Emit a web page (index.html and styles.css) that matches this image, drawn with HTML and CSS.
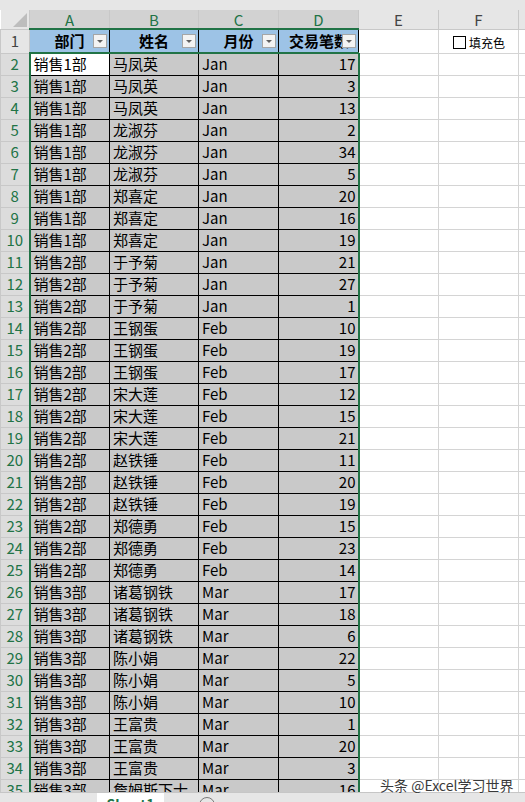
FILE: index.html
```html
<!DOCTYPE html>
<html lang="zh-CN">
<head>
    <meta charset="UTF-8">
    <meta name="viewport" content="width=device-width, initial-scale=1.0">
    <title>Sheet1</title>
    <link rel="stylesheet" href="styles.css">
</head>
<body>

    <div class="topbar"></div>

    <div class="sheet">
        <table class="grid">
            <colgroup>
                <col class="c-rh">
                <col class="c-a">
                <col class="c-b">
                <col class="c-c">
                <col class="c-d">
                <col class="c-e">
                <col class="c-f">
                <col class="c-g">
            </colgroup>
            <tr class="colhead">
                <th class="corner"><span class="corner-mark"></span></th>
                <th class="sel">A</th>
                <th class="sel">B</th>
                <th class="sel">C</th>
                <th class="sel">D</th>
                <th>E</th>
                <th>F</th>
                <th></th>
            </tr>
            <tr class="head">
                <th class="rh">1</th>
                <td>部门<span class="filter"></span></td>
                <td>姓名<span class="filter"></span></td>
                <td>月份<span class="filter"></span></td>
                <td class="num-head">交易笔数<span class="filter"></span></td>
                <td class="g"></td>
                <td class="g"><label class="check"><span class="box"></span>填充色</label></td>
                <td class="g"></td>
            </tr>
            <tr class="first"><th class="rh sel">2</th><td class="a active">销售1部</td><td>马凤英</td><td>Jan</td><td class="n">17</td><td class="g"></td><td class="g"></td><td class="g"></td></tr>
            <tr><th class="rh sel">3</th><td class="a">销售1部</td><td>马凤英</td><td>Jan</td><td class="n">3</td><td class="g"></td><td class="g"></td><td class="g"></td></tr>
            <tr><th class="rh sel">4</th><td class="a">销售1部</td><td>马凤英</td><td>Jan</td><td class="n">13</td><td class="g"></td><td class="g"></td><td class="g"></td></tr>
            <tr><th class="rh sel">5</th><td class="a">销售1部</td><td>龙淑芬</td><td>Jan</td><td class="n">2</td><td class="g"></td><td class="g"></td><td class="g"></td></tr>
            <tr><th class="rh sel">6</th><td class="a">销售1部</td><td>龙淑芬</td><td>Jan</td><td class="n">34</td><td class="g"></td><td class="g"></td><td class="g"></td></tr>
            <tr><th class="rh sel">7</th><td class="a">销售1部</td><td>龙淑芬</td><td>Jan</td><td class="n">5</td><td class="g"></td><td class="g"></td><td class="g"></td></tr>
            <tr><th class="rh sel">8</th><td class="a">销售1部</td><td>郑喜定</td><td>Jan</td><td class="n">20</td><td class="g"></td><td class="g"></td><td class="g"></td></tr>
            <tr><th class="rh sel">9</th><td class="a">销售1部</td><td>郑喜定</td><td>Jan</td><td class="n">16</td><td class="g"></td><td class="g"></td><td class="g"></td></tr>
            <tr><th class="rh sel">10</th><td class="a">销售1部</td><td>郑喜定</td><td>Jan</td><td class="n">19</td><td class="g"></td><td class="g"></td><td class="g"></td></tr>
            <tr><th class="rh sel">11</th><td class="a">销售2部</td><td>于予菊</td><td>Jan</td><td class="n">21</td><td class="g"></td><td class="g"></td><td class="g"></td></tr>
            <tr><th class="rh sel">12</th><td class="a">销售2部</td><td>于予菊</td><td>Jan</td><td class="n">27</td><td class="g"></td><td class="g"></td><td class="g"></td></tr>
            <tr><th class="rh sel">13</th><td class="a">销售2部</td><td>于予菊</td><td>Jan</td><td class="n">1</td><td class="g"></td><td class="g"></td><td class="g"></td></tr>
            <tr><th class="rh sel">14</th><td class="a">销售2部</td><td>王钢蛋</td><td>Feb</td><td class="n">10</td><td class="g"></td><td class="g"></td><td class="g"></td></tr>
            <tr><th class="rh sel">15</th><td class="a">销售2部</td><td>王钢蛋</td><td>Feb</td><td class="n">19</td><td class="g"></td><td class="g"></td><td class="g"></td></tr>
            <tr><th class="rh sel">16</th><td class="a">销售2部</td><td>王钢蛋</td><td>Feb</td><td class="n">17</td><td class="g"></td><td class="g"></td><td class="g"></td></tr>
            <tr><th class="rh sel">17</th><td class="a">销售2部</td><td>宋大莲</td><td>Feb</td><td class="n">12</td><td class="g"></td><td class="g"></td><td class="g"></td></tr>
            <tr><th class="rh sel">18</th><td class="a">销售2部</td><td>宋大莲</td><td>Feb</td><td class="n">15</td><td class="g"></td><td class="g"></td><td class="g"></td></tr>
            <tr><th class="rh sel">19</th><td class="a">销售2部</td><td>宋大莲</td><td>Feb</td><td class="n">21</td><td class="g"></td><td class="g"></td><td class="g"></td></tr>
            <tr><th class="rh sel">20</th><td class="a">销售2部</td><td>赵铁锤</td><td>Feb</td><td class="n">11</td><td class="g"></td><td class="g"></td><td class="g"></td></tr>
            <tr><th class="rh sel">21</th><td class="a">销售2部</td><td>赵铁锤</td><td>Feb</td><td class="n">20</td><td class="g"></td><td class="g"></td><td class="g"></td></tr>
            <tr><th class="rh sel">22</th><td class="a">销售2部</td><td>赵铁锤</td><td>Feb</td><td class="n">19</td><td class="g"></td><td class="g"></td><td class="g"></td></tr>
            <tr><th class="rh sel">23</th><td class="a">销售2部</td><td>郑德勇</td><td>Feb</td><td class="n">15</td><td class="g"></td><td class="g"></td><td class="g"></td></tr>
            <tr><th class="rh sel">24</th><td class="a">销售2部</td><td>郑德勇</td><td>Feb</td><td class="n">23</td><td class="g"></td><td class="g"></td><td class="g"></td></tr>
            <tr><th class="rh sel">25</th><td class="a">销售2部</td><td>郑德勇</td><td>Feb</td><td class="n">14</td><td class="g"></td><td class="g"></td><td class="g"></td></tr>
            <tr><th class="rh sel">26</th><td class="a">销售3部</td><td>诸葛钢铁</td><td>Mar</td><td class="n">17</td><td class="g"></td><td class="g"></td><td class="g"></td></tr>
            <tr><th class="rh sel">27</th><td class="a">销售3部</td><td>诸葛钢铁</td><td>Mar</td><td class="n">18</td><td class="g"></td><td class="g"></td><td class="g"></td></tr>
            <tr><th class="rh sel">28</th><td class="a">销售3部</td><td>诸葛钢铁</td><td>Mar</td><td class="n">6</td><td class="g"></td><td class="g"></td><td class="g"></td></tr>
            <tr><th class="rh sel">29</th><td class="a">销售3部</td><td>陈小娟</td><td>Mar</td><td class="n">22</td><td class="g"></td><td class="g"></td><td class="g"></td></tr>
            <tr><th class="rh sel">30</th><td class="a">销售3部</td><td>陈小娟</td><td>Mar</td><td class="n">5</td><td class="g"></td><td class="g"></td><td class="g"></td></tr>
            <tr><th class="rh sel">31</th><td class="a">销售3部</td><td>陈小娟</td><td>Mar</td><td class="n">10</td><td class="g"></td><td class="g"></td><td class="g"></td></tr>
            <tr><th class="rh sel">32</th><td class="a">销售3部</td><td>王富贵</td><td>Mar</td><td class="n">1</td><td class="g"></td><td class="g"></td><td class="g"></td></tr>
            <tr><th class="rh sel">33</th><td class="a">销售3部</td><td>王富贵</td><td>Mar</td><td class="n">20</td><td class="g"></td><td class="g"></td><td class="g"></td></tr>
            <tr><th class="rh sel">34</th><td class="a">销售3部</td><td>王富贵</td><td>Mar</td><td class="n">3</td><td class="g"></td><td class="g"></td><td class="g"></td></tr>
            <tr><th class="rh sel">35</th><td class="a">销售3部</td><td>詹姆斯下士</td><td>Mar</td><td class="n">16</td><td class="g"></td><td class="g"></td><td class="g"></td></tr>
        </table>
    </div>

    <div class="tabbar">
        <div class="tab">Sheet1</div>
        <div class="add-sheet"></div>
    </div>

    <!-- watermark over the grid -->
    <div class="watermark">头条 @Excel学习世界</div>

</body>
</html>
```

FILE: styles.css
```css
* {
    margin: 0;
    padding: 0;
    box-sizing: border-box;
}

body {
    width: 525px;
    height: 802px;
    overflow: hidden;
    position: relative;
    background-color: #ffffff;
    font-family: "Noto Sans CJK SC", "Liberation Sans", sans-serif;
    color: #000000;
}

.topbar {
    height: 10px;
    background-color: #e6e6e6;
}

.sheet {
    height: 782px;
    overflow: hidden;
}

/* Grid */
.grid {
    border-collapse: collapse;
    table-layout: fixed;
    width: 598px;
}

.c-rh { width: 29px; }
.c-a { width: 80px; }
.c-b { width: 89px; }
.c-c { width: 80px; }
.c-d { width: 80px; }
.c-e { width: 80px; }
.c-f { width: 80px; }
.c-g { width: 80px; }

.colhead th {
    height: 19px;
    background-color: #e6e6e6;
    color: #444444;
    font-weight: normal;
    font-size: 15px;
    line-height: 17px;
    text-align: center;
    border-left: 1px solid #c8c8c8;
    border-right: 1px solid #c8c8c8;
    border-bottom: 1px solid #c8c8c8;
}

.colhead th.sel {
    background-color: #d2d2d2;
    color: #217346;
    border-bottom: 2px solid #217346;
}

.colhead th.corner {
    position: relative;
    border-left: none;
}

.corner-mark {
    position: absolute;
    right: 2px;
    bottom: 2px;
    width: 0;
    height: 0;
    border-left: 14px solid transparent;
    border-bottom: 14px solid #bdbdbd;
}

.rh {
    height: 22px;
    background-color: #e6e6e6;
    color: #444444;
    font-weight: normal;
    font-size: 15px;
    line-height: 20px;
    text-align: center;
    border: 1px solid #c8c8c8;
}

.rh.sel {
    background-color: #dcdcdc;
    color: #217346;
}

td {
    height: 22px;
    padding: 0 3px;
    font-size: 15px;
    line-height: 20px;
    white-space: nowrap;
    overflow: hidden;
    background-color: #c9c9c9;
    border: 1px solid #000000;
}

td.n {
    text-align: right;
    padding-right: 2px;
}

td.g {
    background-color: #ffffff;
    border: 1px solid #d4d4d4;
}

td.active {
    background-color: #ffffff;
}

/* Header row of the table */
.head td {
    position: relative;
    background-color: #9dc3e6;
    font-weight: bold;
    text-align: center;
    padding: 0 3px;
}

.head td.num-head {
    text-align: left;
    padding-left: 10px;
}

.head td.g {
    background-color: #ffffff;
    font-weight: normal;
}

.filter {
    position: absolute;
    right: 2px;
    top: 4px;
    width: 14px;
    height: 14px;
    background-color: #f3f3f3;
    border: 1px solid #a6a6a6;
}

.filter::after {
    content: '';
    position: absolute;
    left: 3px;
    top: 5px;
    border-left: 3px solid transparent;
    border-right: 3px solid transparent;
    border-top: 3px solid #606060;
}

/* Selection outline */
td.a {
    border-left: 2px solid #217346;
}

td.n {
    border-right: 2px solid #217346;
}

tr.first td:not(.g) {
    border-top: 2px solid #217346;
}

/* Form checkbox floating in F1 */
.check {
    display: flex;
    align-items: center;
    gap: 3px;
    padding-left: 11px;
    padding-top: 3px;
    font-size: 12px;
    color: #000000;
}

.check .box {
    width: 13px;
    height: 13px;
    border: 1px solid #000000;
    background-color: #ffffff;
}

/* Sheet tabs */
.tabbar {
    height: 10px;
    display: flex;
    align-items: flex-start;
    background-color: #e6e6e6;
    border-top: 1px solid #c6c6c6;
    padding-left: 97px;
}

.tab {
    width: 67px;
    height: 10px;
    background-color: #ffffff;
    color: #217346;
    font-size: 14px;
    font-weight: bold;
    line-height: 14px;
    text-align: center;
    padding-top: 4px;
    overflow: hidden;
}

.add-sheet {
    width: 16px;
    height: 16px;
    margin-left: 35px;
    margin-top: 4px;
    border: 1px solid #7a7a7a;
    border-radius: 50%;
}

.watermark {
    position: absolute;
    left: 380px;
    top: 775px;
    font-size: 14px;
    color: #3a3a3a;
    text-shadow: 0 0 2px #ffffff, 0 0 2px #ffffff;
    white-space: nowrap;
}
```
